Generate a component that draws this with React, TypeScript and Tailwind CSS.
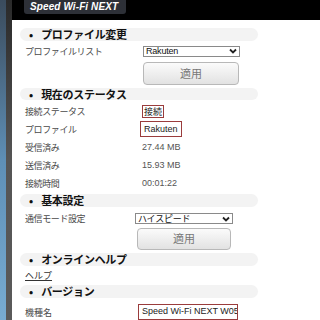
import React from "react";

const jp = { fontFamily: '"Noto Sans CJK JP", "Noto Sans", sans-serif' };
const lat = { fontFamily: '"Liberation Sans", "Noto Sans CJK JP", sans-serif' };

function Section({ title, className = "" }: { title: string; className?: string }) {
  return (
    <div className={`ml-[8px] mr-[62px] h-[14px] rounded-full bg-[#f3f3f3] flex items-center ${className}`}>
      <span className="ml-[9px] text-[11px] font-bold text-[#111] leading-none">•</span>
      <span className="ml-[8px] text-[11px] font-bold text-[#111] leading-none tracking-[-0.3px]">{title}</span>
    </div>
  );
}

function Chevron() {
  return (
    <svg width="8" height="6" viewBox="0 0 8 6" className="mr-[2px]">
      <path d="M1 1.5 L4 4.5 L7 1.5" stroke="#222" strokeWidth="1.8" fill="none" />
    </svg>
  );
}

function Select({ value, className = "", latin = true }: { value: string; className?: string; latin?: boolean }) {
  return (
    <div className={`h-[11px] border border-[#8a8a8a] bg-white flex items-center justify-between ${className}`}>
      <span className="ml-[2px] text-[9px] leading-none text-[#111] tracking-[-0.2px]" style={latin ? lat : jp}>{value}</span>
      <Chevron />
    </div>
  );
}

function ApplyButton({ className = "" }: { className?: string }) {
  return (
    <div className={`h-[24px] rounded-[4px] border border-[#b8b8b8] bg-gradient-to-b from-[#fbfbfb] to-[#e2e2e2] flex items-center justify-center ${className}`}>
      <span className="text-[11px] text-[#777] leading-none">適用</span>
    </div>
  );
}

function Row({ label, children }: { label: string; children?: React.ReactNode }) {
  return (
    <div className="h-[18px] flex items-center">
      <span className="w-[130px] pl-[13px] text-[9px] text-[#4a4a4a] leading-none tracking-[-0.4px]">{label}</span>
      <div className="flex items-center">{children}</div>
    </div>
  );
}

export default function App() {
  return (
    <div className="w-[320px] h-[320px] overflow-hidden flex bg-white" style={jp}>
      <div className="w-[12px] h-full flex">
        <div className="w-[6px] h-full bg-gradient-to-b from-[#3a4b5c] via-[#5e8fb6] to-[#78acd2]" />
        <div className="w-[6px] h-full bg-gradient-to-b from-[#2a2a2a] via-[#555] to-[#5a5a5a]" />
      </div>
      <div className="flex-1 flex flex-col">
        <div className="h-[20px] bg-black shrink-0 flex">
          <div className="ml-[12px] w-[102px] h-[14px] bg-[#2d3037] rounded-b-[3px] flex items-center pl-[6px]">
            <span className="text-[10px] font-bold italic text-white leading-none tracking-[0.1px]" style={{ fontFamily: '"Liberation Sans", Arial, sans-serif' }}>Speed Wi-Fi NEXT</span>
          </div>
        </div>

        <Section title="プロファイル変更" className="mt-[8px]" />
        <div className="h-[16px] mt-[3px] flex items-center">
          <span className="w-[131px] pl-[13px] text-[9px] text-[#4a4a4a] leading-none tracking-[-0.4px]">プロファイルリスト</span>
          <Select value="Rakuten" className="w-[97px]" />
        </div>
        <ApplyButton className="ml-[131px] w-[96px] mt-[4px]" />

        <Section title="現在のステータス" className="mt-[3px]" />
        <div className="mt-[2px] flex flex-col">
          <Row label="接続ステータス">
            <span className="border-[1.5px] border-[#9a3c3c] px-[1px] h-[13px] flex items-center text-[9px] text-[#222] leading-none">接続</span>
          </Row>
          <Row label="プロファイル">
            <span className="border-[1.5px] border-[#9a3c3c] px-[3px] h-[16px] flex items-center text-[9px] text-[#222] leading-none -ml-[2px]" style={lat}>Rakuten</span>
          </Row>
          <Row label="受信済み">
            <span className="text-[9px] text-[#555] leading-none" style={lat}>27.44 MB</span>
          </Row>
          <Row label="送信済み">
            <span className="text-[9px] text-[#555] leading-none" style={lat}>15.93 MB</span>
          </Row>
          <Row label="接続時間">
            <span className="text-[9px] text-[#555] leading-none" style={lat}>00:01:22</span>
          </Row>
        </div>

        <Section title="基本設定" className="mt-[2px]" />
        <div className="h-[16px] mt-[4px] flex items-center">
          <span className="w-[123px] pl-[13px] text-[9px] text-[#4a4a4a] leading-none tracking-[-0.4px]">通信モード設定</span>
          <Select value="ハイスピード" className="w-[98px]" latin={false} />
        </div>
        <ApplyButton className="ml-[125px] w-[94px] mt-[2px]" />

        <Section title="オンラインヘルプ" className="mt-[3px]" />
        <div className="h-[20px] flex items-center pl-[13px]">
          <span className="text-[9px] text-[#333] underline leading-none">ヘルプ</span>
        </div>
        <Section title="バージョン" className="mt-[1px]" />
        <div className="h-[16px] mt-[6px] flex items-start">
          <span className="w-[126px] pl-[13px] text-[9px] text-[#4a4a4a] leading-none pt-[4px]">機種名</span>
          <span className="w-[100px] h-[16px] border-[1.5px] border-[#9a3c3c] px-[3px] flex items-center text-[9px] text-[#222] leading-none whitespace-nowrap overflow-hidden" style={lat}>Speed Wi-Fi NEXT W05</span>
        </div>
      </div>
    </div>
  );
}
